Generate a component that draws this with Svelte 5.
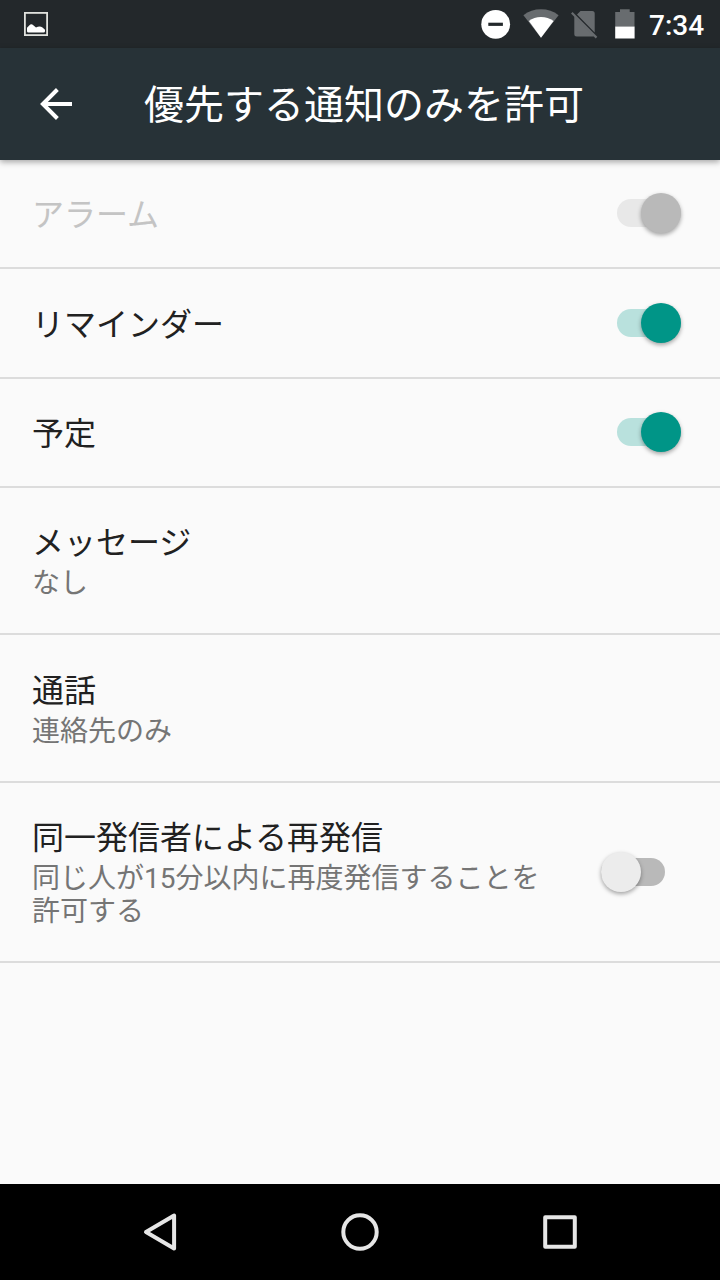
<script>
  const rows = [
    { title: 'アラーム', toggle: 'disabled', height: 109 },
    { title: 'リマインダー', toggle: 'on', height: 110 },
    { title: '予定', toggle: 'on', height: 109 },
    { title: 'メッセージ', summary: 'なし', height: 147 },
    { title: '通話', summary: '連絡先のみ', height: 148 },
    { title: '同一発信者による再発信', summary: '同じ人が15分以内に再度発信することを許可する', toggle: 'off', height: 180 }
  ];
</script>

<div class="screen">
  <div class="status">
    <svg class="picture" width="24" height="24" viewBox="0 0 24 24">
      <rect x="0.9" y="0.9" width="22.2" height="22.2" fill="none" stroke="#e0e2de" stroke-width="1.8" />
      <path d="M3 19.2V15.8L5.2 13.4Q7.3 11 9.3 13.2L12 15.6Q15.5 13.3 18.5 15.4L21 17.8V19.2Q21 20.6 19.6 20.6H4.4Q3 20.6 3 19.2Z" fill="#fff" />
    </svg>
    <svg width="240" height="48" viewBox="480 0 240 48">
      <circle cx="495.7" cy="24.3" r="14.4" fill="#fff" />
      <rect x="488.3" y="22.7" width="14.6" height="3.2" fill="#23282b" />
      <path d="M523.4 15.2Q531 9.3 541 9.3T558.6 15.2L541 37.7Z" fill="#686c6f" />
      <path d="M528.9 21.1Q534 17 541 17T553.6 21.1L541 37.7Z" fill="#fff" />
      <path d="M580.5 11H592.2Q594.7 11 594.7 13.5V32.4L577 14.5ZM574.3 16V34Q574.3 36.5 576.8 36.5H592.2Q593.3 36.5 594 36Z" fill="#686c6f" />
      <path d="M571.8 12.8L596.5 37.6" stroke="#686c6f" stroke-width="2.2" />
      <path d="M615.2 12H620V9.3H629.7V12H634.5V27H615.2Z" fill="#686c6f" />
      <rect x="615.2" y="26.6" width="19.4" height="11.9" fill="#fff" />
    </svg>
    <span class="clock">7:34</span>
  </div>
  <header>
    <svg width="32" height="32" viewBox="0 0 32 32" fill="none" stroke="#fff" stroke-width="4">
      <path d="M32 16H3M17.4 1.5L2.9 16L17.4 30.5" />
    </svg>
    <h1>優先する通知のみを許可</h1>
  </header>
  <main>
    {#each rows as row}
      <section class:disabled={row.toggle === 'disabled'} style="height: {row.height}px">
        <div class="text" class:single={!row.summary}>
          <div class="title">{row.title}</div>
          {#if row.summary}<div class="summary">{row.summary}</div>{/if}
        </div>
        {#if row.toggle}
          <div class="switch {row.toggle}"><i></i></div>
        {/if}
      </section>
    {/each}
  </main>
  <nav>
    <svg width="720" height="96" viewBox="0 0 720 96" fill="none" stroke="#e6e6e6" stroke-width="4" stroke-linejoin="round">
      <path d="M174.1 31.6V64.4L146 48Z" />
      <circle cx="360" cy="48" r="16.7" />
      <rect x="545.2" y="33.2" width="29.6" height="29.6" />
    </svg>
  </nav>
</div>

<style>
  :global(body) { margin: 0; }
  .screen {
    width: 720px; height: 1280px; display: flex; flex-direction: column; overflow: hidden;
    background: #fafafa; font-family: Roboto, "Noto Sans CJK JP", sans-serif;
  }
  svg { display: block; flex: none; }
  .status { height: 48px; flex: none; display: flex; align-items: center; background: #23282b; }
  .picture { margin-left: 24px; margin-right: 432px; }
  .clock { margin-left: -71px; padding-top: 3px; color: #fff; font-size: 28px; font-weight: 500; line-height: 45px; white-space: nowrap; }
  header {
    height: 112px; flex: none; display: flex; align-items: center; box-sizing: border-box; padding-left: 40px;
    background: #273237; box-shadow: 0 2px 6px rgba(0, 0, 0, .35); z-index: 1;
  }
  h1 { margin: 4px 0 0 72px; color: #fff; font-size: 40px; line-height: 56px; font-weight: 400; white-space: nowrap; }
  main { flex: 1; }
  section {
    box-sizing: border-box; display: flex; align-items: center; justify-content: space-between;
    padding: 0 32px; border-bottom: 2px solid #dcdcdc;
  }
  .text { width: 512px; padding-top: 1px; }
  .single { padding-top: 3px; }
  .title { font-size: 32px; line-height: 42px; color: #212121; }
  .summary { margin-top: 3px; font-size: 28px; line-height: 33px; color: #757575; }
  .disabled .title { color: #c4c4c4; }
  .switch { width: 94px; height: 28px; display: flex; align-items: center; box-sizing: border-box; margin-bottom: 1px; padding: 0 7px 0 23px; }
  .switch::before { content: ""; width: 64px; height: 28px; border-radius: 14px; flex: none; background: #b9e1dd; }
  .switch i {
    width: 40px; height: 40px; flex: none; margin-left: -40px; border-radius: 50%;
    background: #009587; box-shadow: 0 2px 4px rgba(0, 0, 0, .35);
  }
  .disabled .switch::before { background: #e8e8e8; }
  .disabled .switch i { background: #b9b9b9; }
  .off { padding-left: 7px; }
  .off::before { background: #b9b9b9; }
  .switch.off::before { background: #b9b9b9; }
  .switch.off i { margin-left: -64px; background: #ececec; }
  nav { height: 96px; flex: none; background: #000; }
</style>
